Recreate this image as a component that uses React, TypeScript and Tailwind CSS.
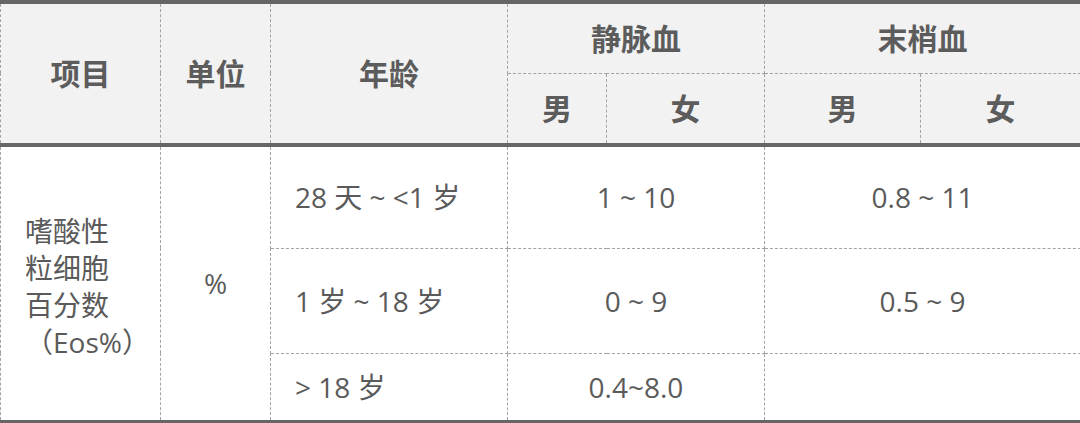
const font = { fontFamily: '"Open Sans", "Noto Sans CJK SC", sans-serif' };

const th = "border border-dashed border-[#a3a3a3] bg-[#f2f2f2] text-center font-bold text-[30px] text-[#5c5c5c]";
const td = "border border-dashed border-[#a3a3a3] text-[28px] text-[#5a5a5a]";

const rows = [
  { age: "28 天 ~ <1 岁", vein: "1 ~ 10", tip: "0.8 ~ 11", h: "h-[103px]" },
  { age: "1 岁 ~ 18 岁", vein: "0 ~ 9", tip: "0.5 ~ 9", h: "h-[105px]" },
  { age: "> 18 岁", vein: "0.4~8.0", tip: "", h: "h-[69px]" },
];

export default function App() {
  return (
    <div className="w-[1080px] h-[423px] bg-white overflow-hidden" style={font}>
      <table className="w-[1080px] table-fixed border-collapse border-t-4 border-b-[5px] border-t-[#666666] border-b-[#666666]">
        <colgroup>
          <col className="w-[160px]" />
          <col className="w-[110px]" />
          <col className="w-[237px]" />
          <col className="w-[99px]" />
          <col className="w-[158px]" />
          <col className="w-[156px]" />
          <col className="w-[160px]" />
        </colgroup>
        <thead className="border-b-4 border-b-[#666666]">
          <tr className="h-[71px]">
            <th rowSpan={2} className={th}>项目</th>
            <th rowSpan={2} className={th}>单位</th>
            <th rowSpan={2} className={th}>年龄</th>
            <th colSpan={2} className={th}>静脉血</th>
            <th colSpan={2} className={th}>末梢血</th>
          </tr>
          <tr className="h-[72px]">
            <th className={th}>男</th>
            <th className={th}>女</th>
            <th className={th}>男</th>
            <th className={th}>女</th>
          </tr>
        </thead>
        <tbody>
          {rows.map((r, i) => (
            <tr key={i} className={r.h}>
              {i === 0 && (
                <>
                  <td rowSpan={3} className={`${td} pl-[24px] pt-[8px] leading-[37px] align-middle`}>
                    嗜酸性<br />粒细胞<br />百分数<br />（Eos%）
                  </td>
                  <td rowSpan={3} className={`${td} text-center`}>%</td>
                </>
              )}
              <td className={`${td} pl-[24px]`}>{r.age}</td>
              <td colSpan={2} className={`${td} text-center`}>{r.vein}</td>
              <td colSpan={3} className={`${td} text-center`}>{r.tip}</td>
            </tr>
          ))}
        </tbody>
      </table>
    </div>
  );
}
